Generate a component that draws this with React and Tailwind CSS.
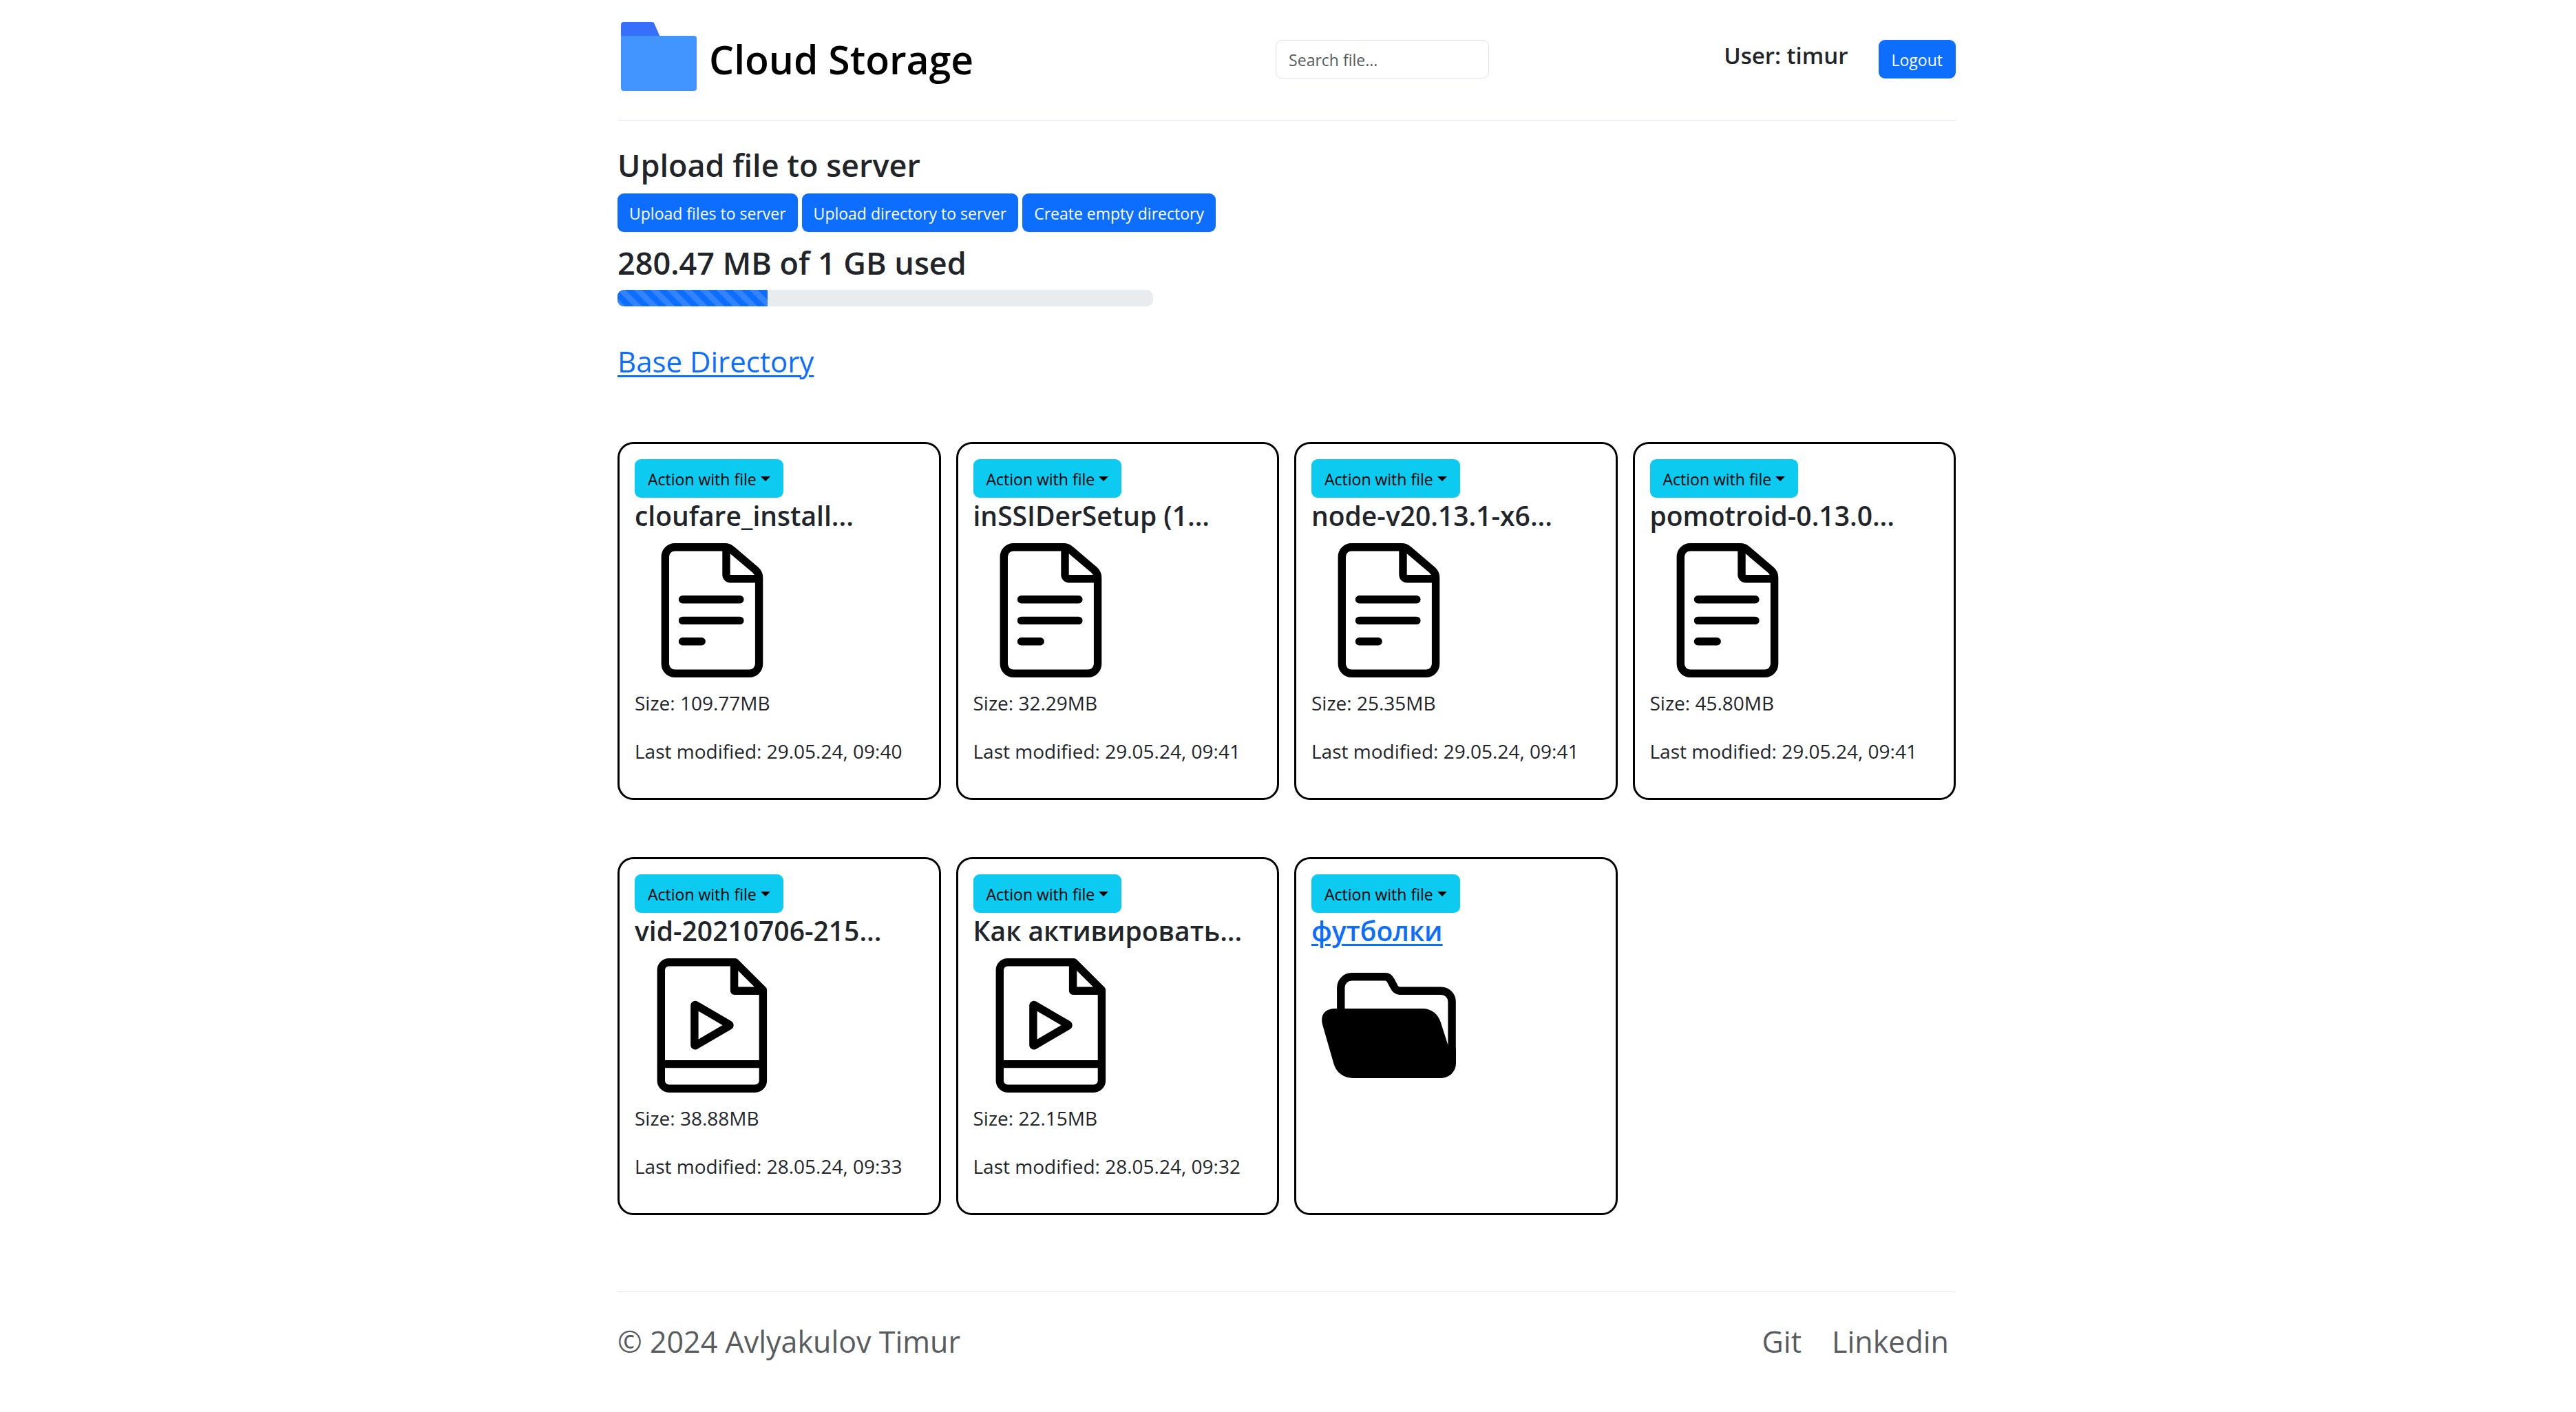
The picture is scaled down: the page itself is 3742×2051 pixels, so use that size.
import React from "react";

const FILES = [
  { name: "cloufare_install...", kind: "document", size: "109.77MB", modified: "29.05.24, 09:40" },
  { name: "inSSIDerSetup (1...", kind: "document", size: "32.29MB", modified: "29.05.24, 09:41" },
  { name: "node-v20.13.1-x6...", kind: "document", size: "25.35MB", modified: "29.05.24, 09:41" },
  { name: "pomotroid-0.13.0...", kind: "document", size: "45.80MB", modified: "29.05.24, 09:41" },
  { name: "vid-20210706-215...", kind: "video", size: "38.88MB", modified: "28.05.24, 09:33" },
  { name: "Как активировать...", kind: "video", size: "22.15MB", modified: "28.05.24, 09:32" },
  { name: "футболки", kind: "folder" },
];

function Logo() {
  return (
    <svg viewBox="0 0 110 100" className="ml-[5px] mb-2 h-[100px] w-[110px] shrink-0" aria-hidden="true">
      <path d="M0 24V4a4 4 0 0 1 4-4h41c2 0 3.300 1 3.800 3L58 24z" fill="#386efc" />
      <path d="M0 20h106a4 4 0 0 1 4 4v72a4 4 0 0 1-4 4H4a4 4 0 0 1-4-4z" fill="#4294ff" />
    </svg>
  );
}

const ICON = "ml-[15px] block size-[195px]";

function DocumentIcon() {
  return (
    <svg viewBox="0 0 195 195" className={ICON} fill="none" stroke="#000" strokeWidth="11.4" aria-hidden="true">
      <path d="M43.300 5.700H116c4 0 7 1.300 10 4L160.500 39c3.300 3 5.100 6.500 5.100 11v125.300a14 14 0 0 1-14 14H43.300a14 14 0 0 1-14-14V19.700a14 14 0 0 1 14-14z" />
      <path d="M118 5.700V46a5.700 5.700 0 0 0 5.700 5.700h42" />
      <path d="M54.500 81.700h83.400M54.500 112.400h83.400M54.500 142.800h27.700" strokeLinecap="round" />
    </svg>
  );
}

function VideoIcon() {
  return (
    <svg viewBox="0 0 195 195" className={ICON} fill="none" stroke="#000" strokeWidth="11.4" strokeLinejoin="round" aria-hidden="true">
      <path d="M34.800 5.700H131L171.400 46v131.700a11.500 11.500 0 0 1-11.500 11.500H34.800a11.500 11.500 0 0 1-11.500-11.500V17.200a11.500 11.500 0 0 1 11.500-11.500z" />
      <path d="M129.600 5.700v41.500h41.800M23.300 153.600h148.100" />
      <path d="M71.900 68.500v57.400a1 1 0 0 0 1.500 .8L122.500 98a1 1 0 0 0 0-1.700L73.400 67.700a1 1 0 0 0-1.500 .8z" />
    </svg>
  );
}

function FolderIcon() {
  return (
    <svg viewBox="0 0 195 195" className={ICON} aria-hidden="true">
      <path
        d="M27.800 80V42.600a15.800 15.800 0 0 1 15.800-15.800h48.900c4 0 6 2 8 6l4 7.500c2 4.500 5 6.900 9 6.900h59.800a15.800 15.800 0 0 1 15.800 15.800V152"
        fill="none"
        stroke="#000"
        strokeWidth="11.4"
      />
      <path d="M19.300 73h127.100c13 0 23 8 26.500 20.300l10.700 33.200L195 130v22.500a21.500 21.500 0 0 1-21.500 21.500H45.400C32 174 21 166 17.500 153.300L1 96C-2.500 82 5 73 19.300 73z" />
    </svg>
  );
}

const ICONS = { document: DocumentIcon, video: VideoIcon, folder: FolderIcon };

function PrimaryButton({ children, padding = "px-[17px]" }) {
  return (
    <button type="button" className={`h-14 cursor-pointer rounded-[9px] bg-[#0d6efd] pt-0.5 text-[23px] whitespace-nowrap text-white ${padding}`}>
      {children}
    </button>
  );
}

function FileCard({ file }) {
  const Icon = ICONS[file.kind];
  return (
    <article className="rounded-[23px] border-3 border-black px-[22px] pt-[22px] pb-[45px]">
      <button
        type="button"
        aria-haspopup="menu"
        className="flex h-14 cursor-pointer items-center gap-1.5 rounded-[9px] bg-[#0dcaf0] px-[19px] text-[23px] whitespace-nowrap text-black"
      >
        <span className="pt-0.5">Action with file</span>
        <svg viewBox="0 0 14 7" className="h-[7px] w-3.5" aria-hidden="true">
          <path d="M0 0h14L7 7z" />
        </svg>
      </button>
      <h3 className="mb-3.5 text-[39px] leading-[52px] font-semibold whitespace-nowrap">
        {file.kind === "folder" ? (
          <a href="#folder" className="text-[#0d6efd] underline decoration-3 underline-offset-4">{file.name}</a>
        ) : (
          file.name
        )}
      </h3>
      <Icon />
      {file.size && (
        <div className="mt-3.5 flex flex-col gap-6 text-[28px] leading-[46px] whitespace-nowrap">
          <p>Size: {file.size}</p>
          <p>Last modified: {file.modified}</p>
        </div>
      )}
    </article>
  );
}

export default function App() {
  return (
    <div className="min-h-screen bg-white pr-1 font-['Open_Sans','Noto_Sans',sans-serif] text-[#212529]">
      <div className="mx-auto w-full max-w-[1944px]">
        <header className="flex items-center justify-between border-b border-[#dee2e6] pt-8 pb-[34px]">
          <a href="#home" className="flex items-center gap-[18px] pr-[98px] text-black">
            <Logo />
            <span className="text-[57px] leading-[80px] font-semibold whitespace-nowrap">Cloud Storage</span>
          </a>
          <input
            type="search"
            aria-label="Search file"
            placeholder="Search file..."
            className="h-14 w-[310px] rounded-[9px] border border-[#dee2e6] px-[18px] pt-0.5 text-[23px] placeholder:text-[#585c5f]"
          />
          <div className="flex items-center gap-11">
            <p className="mb-2.5 text-[33px] leading-10 font-semibold whitespace-nowrap">User: timur</p>
            <PrimaryButton padding="px-[19px]">Logout</PrimaryButton>
          </div>
        </header>

        <main>
          <section className="pt-9">
            <h2 className="mb-3 text-[45px] leading-[58px] font-semibold">Upload file to server</h2>
            <div className="flex gap-1.5">
              <PrimaryButton>Upload files to server</PrimaryButton>
              <PrimaryButton>Upload directory to server</PrimaryButton>
              <PrimaryButton>Create empty directory</PrimaryButton>
            </div>
            <h2 id="usage" className="mt-4 mb-2.5 text-[45px] leading-[58px] font-semibold">280.47 MB of 1 GB used</h2>
            <div
              role="progressbar"
              aria-labelledby="usage"
              aria-valuenow={28}
              aria-valuemin={0}
              aria-valuemax={100}
              className="h-6 w-2/5 overflow-hidden rounded-[9px] bg-[#e9ecef]"
            >
              <div className="h-full w-[28%] bg-[#0d6efd] bg-[linear-gradient(45deg,rgba(255,255,255,.15)_25%,transparent_25%,transparent_50%,rgba(255,255,255,.15)_50%,rgba(255,255,255,.15)_75%,transparent_75%,transparent)] bg-size-[24px_24px]" />
            </div>
          </section>

          <nav className="mt-12 text-[42px] leading-[63px]">
            <a href="#base" className="text-[#0d6efd] underline decoration-3 underline-offset-4">Base Directory</a>
          </nav>

          <section className="mt-[86px] grid grid-cols-4 gap-x-[22px] gap-y-[83px]">
            {FILES.map((file) => (
              <FileCard key={file.name} file={file} />
            ))}
          </section>
        </main>

        <footer className="mt-[111px] flex justify-between border-t border-[#dee2e6] pt-10 text-[43px] leading-[63px] text-[#585c5f]">
          <p>© 2024 Avlyakulov Timur</p>
          <div className="flex gap-11 pr-2.5">
            <a href="#git">Git</a>
            <a href="#linkedin">Linkedin</a>
          </div>
        </footer>
      </div>
    </div>
  );
}
